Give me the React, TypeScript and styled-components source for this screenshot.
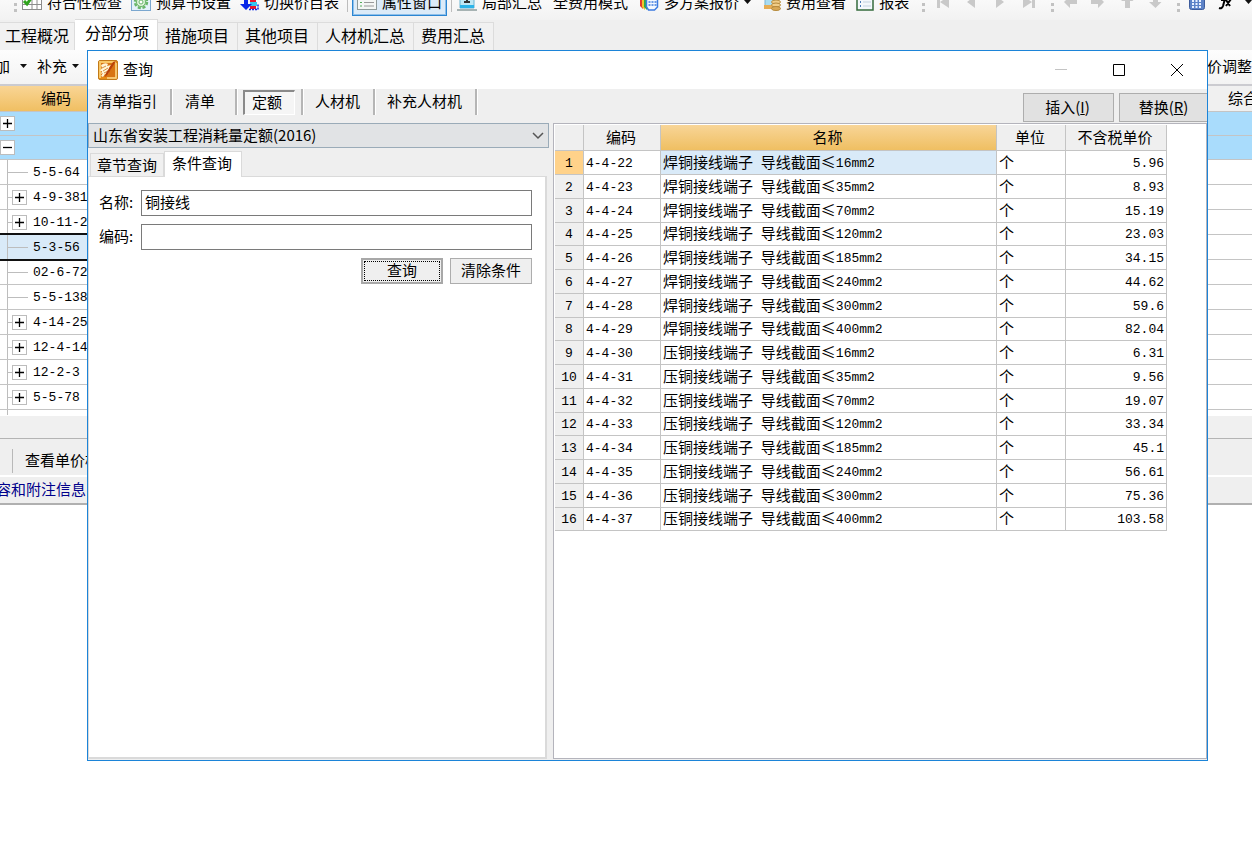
import React from 'react';
import styled, { createGlobalStyle, css } from 'styled-components';

const Global = createGlobalStyle`
  * { box-sizing: border-box; }
  body { margin: 0; background: #fff; color: #000; font: 15px/20px "Noto Sans CJK SC", sans-serif; }
  button, input, select { font: inherit; color: inherit; margin: 0; }
  button { border: 0; padding: 0 0 2px; background: none; white-space: nowrap; }
`;

const LINE = '#c4c4c4';

const Latin = styled.span`
  font-family: "Liberation Mono", monospace;
  font-size: 13px;
  line-height: 1;
  vertical-align: 1px;
`;

/* Half-width characters use the monospaced face beside the full-width ones. */
function Mixed({ text }: { text: string }) {
  const parts = text.split(/([\w.\- :()]+)/).filter(Boolean);
  return (
    <>
      {parts.map((p, i) => (/^[\w.\- :()]+$/.test(p) ? <Latin key={i}>{p}</Latin> : p))}
    </>
  );
}

/* ---------- main window ---------- */

const Desktop = styled.div`
  position: relative;
  min-height: 853px;
  overflow: hidden;
`;

const MainWindow = styled.main`
  background: #fff;
`;

const Toolbar = styled.div`
  display: flex;
  align-items: flex-end;
  height: 20px;
  padding: 0 0 4px 14px;
  overflow: hidden;
  background: linear-gradient(#f9f9f9, #f2f2f2);
`;

const ToolButton = styled.button<{ $on?: boolean; $gap: number }>`
  display: flex;
  align-items: center;
  flex: none;
  gap: 5px;
  height: 26px;
  margin-left: ${(p) => p.$gap}px;
  svg { flex: none; }
  ${(p) => p.$on && css`
    padding: 0 4px 2px;
    background: #dcebf8;
    border: 1px solid #2c86d2;
    box-shadow: inset 0 0 0 1px #8fc0ea;
  `}
`;

const Divider = styled.i<{ $gap: number }>`
  flex: none;
  width: 1px;
  height: 20px;
  margin: 0 0 4px ${(p) => p.$gap}px;
  background: #bdbdbd;
`;

const Grip = styled.i<{ $gap: number }>`
  flex: none;
  width: 3px;
  height: 16px;
  margin: 0 0 4px ${(p) => p.$gap}px;
  background: repeating-linear-gradient(to top, #c2c2c2 0 3px, transparent 3px 6px);
`;

const TabStrip = styled.div`
  display: flex;
  align-items: flex-end;
  height: 30px;
  background: #efefef;
  font-size: 16px;
`;

const MainTab = styled.button<{ $active?: boolean }>`
  height: ${(p) => (p.$active ? 31 : 28)}px;
  padding: ${(p) => (p.$active ? '0 8px 6px 10px' : '0 8px 3px 7px')};
  background: ${(p) => (p.$active ? '#fff' : '#f1f1f1')};
  border: solid #dcdcdc;
  border-width: 1px 1px 0 0;
  &:first-child { padding: 0 5px 3px 5px; }
`;

const SubToolbar = styled.div`
  display: flex;
  justify-content: space-between;
  height: 36px;
  border-bottom: 2px solid #cbcbd0;
  background: linear-gradient(#fdfdfd, #f3f3f3);
`;

const SubGroup = styled.div<{ $shift?: boolean }>`
  display: flex;
  align-items: center;
  overflow: hidden;
  gap: 10px;
  > button:first-child { margin-left: ${(p) => (p.$shift ? -5 : 0)}px; }
`;

const DropButton = styled.button<{ $gap: number }>`
  display: flex;
  align-items: center;
  gap: ${(p) => p.$gap}px;
`;

const Workspace = styled.div`
  display: flex;
  justify-content: space-between;
`;

const TreePane = styled.section`
  width: 88px;
  overflow: hidden;
`;

const SidePane = styled.section`
  flex: 1;
  overflow: hidden;
`;

const SideInner = styled.div`
  width: 46px;
  margin-left: auto;
  padding-left: 22px;
`;

const PaneHead = styled.div<{ $orange?: boolean }>`
  display: flex;
  align-items: center;
  height: 26px;
  padding: 0 0 2px ${(p) => (p.$orange ? 41 : 0)}px;
  overflow: hidden;
  white-space: nowrap;
  border-bottom: 1px solid ${LINE};
  background: ${(p) => (p.$orange ? 'linear-gradient(#f9d595, #f0bf62)' : '#f0f0f0')};
`;

const TreeRow = styled.div<{ $blue?: boolean; $selected?: boolean }>`
  display: flex;
  align-items: center;
  height: ${(p) => (p.$blue ? 24 : 25)}px;
  white-space: nowrap;
  border-bottom: 1px solid ${LINE};
  background: ${(p) => (p.$blue ? '#a9dcfc' : '#fff')};
  ${(p) => p.$selected && css`
    background: #d9eaf8;
    border-bottom-color: #111;
    box-shadow: 0 -2px 0 #111, 0 1px 0 #111;
    position: relative;
  `}
`;

const Gutter = styled.span<{ $leaf?: boolean }>`
  display: flex;
  align-items: center;
  align-self: stretch;
  flex: none;
  width: 26px;
  margin-left: 7px;
  border-left: 1px solid #bdbdbd;
  &::before {
    content: '';
    width: ${(p) => (p.$leaf ? 20 : 4)}px;
    height: 1px;
    background: #bdbdbd;
  }
`;

const Expander = styled.button`
  display: grid;
  place-items: center;
  flex: none;
  width: 15px;
  height: 15px;
  padding: 0;
  border: 1px solid #bcbcbc;
  background: #fff;
`;

const TreeEnd = styled.div`
  height: 6px;
`;

const TreeStem = styled.div`
  height: 5px;
  margin-left: 7px;
  border-left: 1px solid #bdbdbd;
`;

const ScrollTrack = styled.div`
  height: 23px;
  background: #f0f0f0;
  border-bottom: 1px solid #b4b4b4;
`;

const DetailBar = styled.div`
  display: flex;
  align-items: center;
  height: 38px;
  padding: 8px 0 0 12px;
  white-space: nowrap;
  background: #efefef;
  border-bottom: 2px solid #fff;
  > span { padding: 1px 0 3px 12px; border-left: 1px solid #b8b8b8; }
`;

const InfoBar = styled.div`
  display: flex;
  align-items: center;
  height: 28px;
  padding-bottom: 3px;
  background: #efefef;
  border-bottom: 2px solid #b0b0b0;
  color: #00008b;
  white-space: nowrap;
  > a { margin-left: -4px; color: inherit; text-decoration: none; }
`;

/* ---------- query dialog ---------- */

const Dialog = styled.section`
  position: absolute;
  top: 50px;
  left: 87px;
  right: 44px;
  height: 711px;
  display: flex;
  flex-direction: column;
  border: 1px solid #1c84d8;
  background: #efefef;
`;

const TitleBar = styled.header`
  display: flex;
  align-items: center;
  flex: none;
  height: 38px;
  padding: 0 23px 0 10px;
  background: #fff;
  h1 { flex: 1; margin: 0; padding: 0 0 2px 5px; font-size: 15px; font-weight: 400; }
`;

const WindowButtons = styled.div`
  display: flex;
  gap: 44px;
  button { display: flex; padding: 0; }
`;

const DialogTools = styled.div`
  display: flex;
  justify-content: space-between;
  height: 34px;
  overflow: hidden;
`;

const Categories = styled.nav`
  display: flex;
  height: 26px;
`;

const CategoryCell = styled.div<{ $tight?: boolean }>`
  display: flex;
  padding: ${(p) => (p.$tight ? '1px 6px 0' : '0 13px 0 12px')};
  border-right: 2px solid #b5b5b5;
  box-shadow: 1px 0 0 #fff;
  &:first-child { padding: 0 13px 0 9px; }
  &:nth-child(2) { padding: 0 20px 0 13px; }
`;

const CategoryButton = styled.button<{ $pressed?: boolean }>`
  ${(p) => p.$pressed && css`
    width: 52px;
    padding-right: 5px;
    border: solid;
    border-width: 2px 1px 1px 2px;
    border-color: #8a8a8a #fff #fff #8a8a8a;
    background: #f5f5f5;
  `}
`;

const Actions = styled.div`
  display: flex;
  gap: 5px;
  margin-right: -3px;
  padding-top: 4px;
`;

const ActionButton = styled.button`
  width: 91px;
  height: 29px;
  padding: 0 2px 1px 0;
  border: 1px solid #adadad;
  background: #e1e1e1;
`;

const Body = styled.div`
  display: flex;
  flex: 1;
  gap: 4px;
  min-height: 0;
`;

const SearchPane = styled.div`
  display: flex;
  flex-direction: column;
  flex: 0 0 461px;
`;

const LibraryBox = styled.div`
  position: relative;
  select {
    display: block;
    appearance: none;
    width: 100%;
    height: 25px;
    padding: 0 24px 2px 4px;
    border: 1px solid #9aabb8;
    border-radius: 0;
    background: #e1e3e5;
  }
  svg { position: absolute; right: 5px; top: 9px; pointer-events: none; }
`;

const QueryTabs = styled.div`
  display: flex;
  align-items: flex-end;
  height: 28px;
  padding-left: 2px;
`;

const QueryTab = styled.button<{ $active?: boolean }>`
  position: relative;
  height: ${(p) => (p.$active ? 26 : 23)}px;
  margin-bottom: ${(p) => (p.$active ? -1 : 0)}px;
  padding: ${(p) => (p.$active ? '0 9px 4px 7px' : '0 6px 1px')};
  border: 1px solid #dadada;
  border-bottom: 0;
  background: ${(p) => (p.$active ? '#fff' : '#f0f0f0')};
`;

const QueryForm = styled.form`
  flex: 1;
  margin: 0 2px 1px 0;
  padding: 13px 13px 0 10px;
  border: 1px solid #dadada;
  border-width: 1px 2px 2px 1px;
  background: #fff;
`;

const Field = styled.div`
  display: flex;
  align-items: center;
  margin-bottom: 8px;
  label { width: 42px; padding-bottom: 3px; white-space: nowrap; }
  input {
    flex: 1;
    min-width: 0;
    height: 26px;
    padding: 0 3px 4px;
    border: 1px solid #7a7a7a;
    background: #fff;
  }
`;

const FormButtons = styled.div`
  display: flex;
  justify-content: flex-end;
  gap: 7px;
`;

const FormButton = styled.button<{ $focused?: boolean }>`
  width: 82px;
  height: 26px;
  border: 1px solid #adadad;
  background: #efefef;
  ${(p) => p.$focused && css`
    outline: 1px dotted #000;
    outline-offset: -4px;
    border: 2px solid #a8a8a8;
  `}
`;

const ResultPane = styled.div`
  flex: 1;
  min-width: 0;
  margin-bottom: 1px;
  padding: 1px 0 0 1px;
  border: 1px solid #b4b4bc;
  background: #fff;
`;

const ResultTable = styled.table`
  table-layout: fixed;
  width: 612px;
  border-spacing: 0;
  th, td {
    padding: 0 2px 2px;
    line-height: 20px;
    font-weight: 400;
    white-space: nowrap;
    overflow: hidden;
    border: solid ${LINE};
    border-width: 0 1px 1px 0;
  }
  thead tr { height: 26px; }
  thead th { padding: 0 4px 1px 2px; background: #efefef; }
  tbody tr { height: 24px; }
  tbody tr:nth-child(4n) { height: 23px; }
  tbody th { background: #efefef; }
`;

const NameHead = styled.th`
  && { background: linear-gradient(#f8d597, #efbf62); }
`;

const RowNumber = styled.th<{ $current: boolean }>`
  && { background: ${(p) => (p.$current ? '#ffd28a' : '#efefef')}; }
`;

const NameCell = styled.td<{ $current: boolean }>`
  background: ${(p) => (p.$current ? '#d9eaf8' : '#fff')};
`;

const PriceCell = styled.td`
  text-align: right;
`;

/* ---------- icons ---------- */

const Caret = () => (
  <svg width="7" height="4" viewBox="0 0 7 4"><path d="M0 0h7L3.500 4z" fill="#111" /></svg>
);

const CheckSheetIcon = () => (
  <svg width="20" height="18" viewBox="0 0 20 18">
    <rect x=".5" y=".5" width="19" height="16" fill="#fff" stroke="#8c8c8c" />
    <path d="M.5 11.500h19M10 6v11M15 6v11M8 6h12" stroke="#8c8c8c" />
    <path d="M2 8l3 3 5-7" stroke="#2fa31c" strokeWidth="3" fill="none" />
  </svg>
);
const GearIcon = () => (
  <svg width="20" height="20" viewBox="0 0 20 20">
    <rect x=".5" y=".5" width="19" height="18" fill="#e3f1fb" stroke="#7ba7cf" />
    <circle cx="10" cy="10" r="6" fill="#d2efcf" stroke="#68b56b" strokeWidth="2.500" strokeDasharray="3 1.700" />
    <circle cx="10" cy="10" r="4.500" fill="#dff4dc" stroke="#68b56b" />
    <circle cx="10" cy="10" r="2" fill="#fff" stroke="#68b56b" />
  </svg>
);
const SwitchIcon = () => (
  <svg width="19" height="20" viewBox="0 0 19 20">
    <path d="M10 17V8H8l5-6 5 6h-2v9z" fill="#e81830" />
    <path d="M10 10h7v4h-7z" fill="#36c7f0" />
    <path d="M9 17.500h9v-5" stroke="#0a28e8" strokeWidth="1.500" strokeDasharray="2 1" fill="none" />
    <path d="M4 2h4v10h4l-6 6-6-6h4z" fill="#0a28e8" />
  </svg>
);
const ListIcon = () => (
  <svg width="20" height="17" viewBox="0 0 20 17">
    <rect x=".5" y=".5" width="19" height="15" fill="#f5f7f5" stroke="#8e9a9a" />
    <path d="M3 5h2M3 8.500h2M3 12h2" stroke="#57ad5c" />
    <path d="M7 5h10M7 8.500h10M7 12h10" stroke="#9a9a9a" />
  </svg>
);
const SumIcon = () => (
  <svg width="20" height="19" viewBox="0 0 20 19">
    <path d="M3 1h14v14H3z" fill="#bfe8f5" stroke="#6ab4d2" />
    <path d="M7 9h6M10 5v5" stroke="#333" strokeWidth="2" />
    <path d="M3 12h14v3H3z" fill="#2cb4e8" /><path d="M0 16h20v2H0z" fill="#a7b3b3" />
  </svg>
);
const SchemeIcon = () => (
  <svg width="20" height="20" viewBox="0 0 20 20">
    <path d="M1 3v11l3 3V3z" fill="#e23b2c" /><path d="M3 3v12l3 3V3z" fill="#f0c52c" /><path d="M5 3v12l3 3V3z" fill="#2fa84a" />
    <path d="M7.500 2h11v13l-3 3h-6l-2-3z" fill="#f5f9ff" stroke="#3c7be0" strokeWidth="1.500" />
    <path d="M9.500 10h2M12.500 10h2M15.500 10h2M9.500 13h2M12.500 13h2M15.500 13h2" stroke="#3c7be0" strokeWidth="1.500" />
  </svg>
);
const FeeIcon = () => (
  <svg width="17" height="20" viewBox="0 0 17 20">
    <path d="M1 1h10v13H1z" fill="#a9ddf2" stroke="#7fb5d0" />
    <path d="M0 13h9v4H0z" fill="#e6ad55" />
    <ellipse cx="12" cy="10" rx="4.500" ry="2" fill="#f0cd88" stroke="#b58a3c" />
    <ellipse cx="12" cy="13" rx="4.500" ry="2" fill="#f0cd88" stroke="#b58a3c" />
    <ellipse cx="12" cy="16.500" rx="4.500" ry="2" fill="#d9a957" stroke="#b58a3c" />
  </svg>
);
const ReportIcon = () => (
  <svg width="18" height="19" viewBox="0 0 18 19">
    <rect x="1" y="1" width="16" height="16" fill="#f3f8fc" stroke="#356b3c" strokeWidth="1.500" />
    <path d="M4 5h1M4 9h1M4 13h1" stroke="#4a7bb8" strokeWidth="2" /><path d="M7 5h8M7 9h8M7 13h8" stroke="#c3d3e0" />
  </svg>
);
const Nav = ({ d }: { d: string }) => (
  <svg width="13" height="14" viewBox="0 0 13 14"><path d={d} fill="#c9c9c9" /></svg>
);
const CalculatorIcon = () => (
  <svg width="16" height="18" viewBox="0 0 16 18">
    <rect x=".5" y=".5" width="15" height="16" rx="2" fill="#5d83c8" stroke="#3d5c9c" />
    <path d="M3 8h2m1.500 0h2m1.500 0h2M3 11h2m1.500 0h2m1.500 0h2M3 14h2m1.500 0h2m1.500 0h2" stroke="#e8f0ff" strokeWidth="2" />
  </svg>
);
const FormulaIcon = () => (
  <svg width="15" height="16" viewBox="0 0 15 16" fill="none" stroke="#000" strokeWidth="2">
    <path d="M8 1L5 12q-1 3-4 2M3 6h6M8 12l5-7M8 6l4 6M10 4h4" />
  </svg>
);
const AppIcon = () => (
  <svg width="20" height="20" viewBox="0 0 20 20">
    <rect x=".5" y=".5" width="19" height="19" rx="1.500" fill="#e58a14" stroke="#c27a18" />
    <path d="M2 18V2h16" fill="none" stroke="#f9c765" strokeWidth="2" />
    <path d="M3 3h14v14H3z" fill="#d87412" />
    <path d="M3 5q4-3 7-1l-1 2 4-1-2 3 2 1-3 2 1 2-4 1-2 3-2-1 2-3-2 1 1-3-2 0 2-3z" fill="#fff5d6" />
    <path d="M4 8l4-2M5 11l5-3M6 13l4-2" stroke="#c9761c" strokeWidth=".8" />
    <path d="M18 1L10 14l-3 3 1-4L15 2z" fill="#b8400a" />
    <path d="M18 3v15H9" fill="none" stroke="#fbd98c" strokeWidth="1.500" />
  </svg>
);

/* ---------- data ---------- */

const treeRows: [string, boolean][] = [
  ['5-5-64', false], ['4-9-381', true], ['10-11-28', true], ['5-3-56', false], ['02-6-72', false],
  ['5-5-138', false], ['4-14-258', true], ['12-4-14', true], ['12-2-3', true], ['5-5-78', true],
];

const sizes = ['16', '35', '70', '120', '185', '240', '300', '400'];
const prices = ['5.96', '8.93', '15.19', '23.03', '34.15', '44.62', '59.6', '82.04', '6.31', '9.56', '19.07', '33.34', '45.1', '56.61', '75.36', '103.58'];
const results = prices.map((price, i) => ({
  code: `4-4-${22 + i}`,
  name: `${i < 8 ? '焊' : '压'}铜接线端子 导线截面≤${sizes[i % 8]}mm2`,
  price,
}));

const ExpandMark = ({ open }: { open?: boolean }) => (
  <svg width="9" height="9" viewBox="0 0 9 9"><path d={open ? 'M0 4.500h9' : 'M0 4.500h9M4.500 0v9'} stroke="#000" strokeWidth="1.300" /></svg>
);

export default function App() {
  return (
    <Desktop>
      <Global />
      <MainWindow>
        <Toolbar>
          <Grip $gap={0} />
          <ToolButton $gap={5}><CheckSheetIcon />符合性检查</ToolButton>
          <ToolButton $gap={9}><GearIcon />预算书设置</ToolButton>
          <ToolButton $gap={9}><SwitchIcon />切换价目表</ToolButton>
          <Divider $gap={8} />
          <ToolButton $gap={4} $on><ListIcon />属性窗口</ToolButton>
          <Divider $gap={4} />
          <ToolButton $gap={5}><SumIcon />局部汇总</ToolButton>
          <ToolButton $gap={11}>全费用模式</ToolButton>
          <ToolButton $gap={11}><SchemeIcon />多方案报价<Caret /></ToolButton>
          <ToolButton $gap={13}><FeeIcon />费用查看</ToolButton>
          <ToolButton $gap={10}><ReportIcon />报表</ToolButton>
          <Grip $gap={13} />
          <ToolButton $gap={12} aria-label="首条"><Nav d="M0 1h3v12H0zM12 1v12L3 7z" /></ToolButton>
          <ToolButton $gap={14} aria-label="上一条"><Nav d="M11 1v12L3 7z" /></ToolButton>
          <ToolButton $gap={17} aria-label="下一条"><Nav d="M2 1v12l8-6z" /></ToolButton>
          <ToolButton $gap={15} aria-label="末条"><Nav d="M13 1h-3v12h3zM1 1v12l9-6z" /></ToolButton>
          <Grip $gap={16} />
          <ToolButton $gap={10} aria-label="左移"><Nav d="M0 7l6-6v4h7v4H6v4z" /></ToolButton>
          <ToolButton $gap={14} aria-label="右移"><Nav d="M13 7L7 1v4H0v4h7v4z" /></ToolButton>
          <ToolButton $gap={17} aria-label="上移"><Nav d="M6.500 0l6 6H9v7H4V6H0z" /></ToolButton>
          <ToolButton $gap={15} aria-label="下移"><Nav d="M6.500 13l6-6H9V0H4v7H0z" /></ToolButton>
          <Grip $gap={15} />
          <ToolButton $gap={9} aria-label="计算器"><CalculatorIcon /></ToolButton>
          <ToolButton $gap={13} aria-label="公式"><FormulaIcon /></ToolButton>
          <ToolButton $gap={12} aria-label="更多"><Caret /></ToolButton>
        </Toolbar>

        <TabStrip>
          <MainTab>工程概况</MainTab>
          <MainTab $active>分部分项</MainTab>
          <MainTab>措施项目</MainTab>
          <MainTab>其他项目</MainTab>
          <MainTab>人材机汇总</MainTab>
          <MainTab>费用汇总</MainTab>
        </TabStrip>

        <SubToolbar>
          <SubGroup $shift>
            <DropButton $gap={10}>加<Caret /></DropButton>
            <DropButton $gap={5}>补充<Caret /></DropButton>
          </SubGroup>
          <SubGroup><DropButton $gap={0}>价调整</DropButton></SubGroup>
        </SubToolbar>

        <Workspace>
          <TreePane>
            <PaneHead $orange>编码</PaneHead>
            <TreeRow $blue><Expander aria-label="展开"><ExpandMark /></Expander></TreeRow>
            <TreeRow $blue><Expander aria-label="折叠"><ExpandMark open /></Expander></TreeRow>
            {treeRows.map(([code, branch]) => (
              <TreeRow key={code} $selected={code === '5-3-56'}>
                <Gutter $leaf={!branch}>
                  {branch && <Expander aria-label="展开"><ExpandMark /></Expander>}
                </Gutter>
                <Latin>{code}</Latin>
              </TreeRow>
            ))}
            <TreeEnd><TreeStem /></TreeEnd>
            <ScrollTrack />
            <DetailBar><span>查看单价构成</span></DetailBar>
            <InfoBar><a href="#notes">容和附注信息</a></InfoBar>
          </TreePane>
          <SidePane>
            <PaneHead><SideInner>综合单价</SideInner></PaneHead>
            <TreeRow $blue />
            <TreeRow $blue />
            {treeRows.map(([code]) => <TreeRow key={code} />)}
            <TreeEnd />
            <ScrollTrack />
            <DetailBar />
            <InfoBar />
          </SidePane>
        </Workspace>
      </MainWindow>

      <Dialog role="dialog" aria-labelledby="query-title">
        <TitleBar>
          <AppIcon />
          <h1 id="query-title">查询</h1>
          <WindowButtons>
            <button aria-label="最小化"><svg width="14" height="14"><path d="M1 6.500h12" stroke="#c4c4c4" /></svg></button>
            <button aria-label="最大化"><svg width="14" height="14"><path d="M1.500 1.500h11v11h-11z" fill="none" stroke="#000" /></svg></button>
            <button aria-label="关闭"><svg width="14" height="14"><path d="M1 1l12 12M13 1L1 13" stroke="#000" /></svg></button>
          </WindowButtons>
        </TitleBar>

        <DialogTools>
          <Categories>
            <CategoryCell><CategoryButton>清单指引</CategoryButton></CategoryCell>
            <CategoryCell><CategoryButton>清单</CategoryButton></CategoryCell>
            <CategoryCell $tight><CategoryButton $pressed>定额</CategoryButton></CategoryCell>
            <CategoryCell><CategoryButton>人材机</CategoryButton></CategoryCell>
            <CategoryCell><CategoryButton>补充人材机</CategoryButton></CategoryCell>
          </Categories>
          <Actions>
            <ActionButton>插入(<u>I</u>)</ActionButton>
            <ActionButton>替换(<u>R</u>)</ActionButton>
          </Actions>
        </DialogTools>

        <Body>
          <SearchPane>
            <LibraryBox>
              <select aria-label="定额库"><option>山东省安装工程消耗量定额(2016)</option></select>
              <svg width="12" height="8" viewBox="0 0 12 8"><path d="M1 1l5 5 5-5" fill="none" stroke="#555" strokeWidth="1.500" /></svg>
            </LibraryBox>
            <QueryTabs>
              <QueryTab>章节查询</QueryTab>
              <QueryTab $active>条件查询</QueryTab>
            </QueryTabs>
            <QueryForm onSubmit={(e) => e.preventDefault()}>
              <Field><label htmlFor="name">名称:</label><input id="name" defaultValue="铜接线" /></Field>
              <Field><label htmlFor="code">编码:</label><input id="code" /></Field>
              <FormButtons>
                <FormButton type="submit" $focused>查询</FormButton>
                <FormButton type="reset">清除条件</FormButton>
              </FormButtons>
            </QueryForm>
          </SearchPane>

          <ResultPane>
            <ResultTable>
              <colgroup>
                <col style={{ width: 29 }} /><col style={{ width: 77 }} /><col />
                <col style={{ width: 69 }} /><col style={{ width: 101 }} />
              </colgroup>
              <thead>
                <tr><th /><th>编码</th><NameHead>名称</NameHead><th>单位</th><th>不含税单价</th></tr>
              </thead>
              <tbody>
                {results.map((r, i) => (
                  <tr key={r.code}>
                    <RowNumber $current={i === 0}><Latin>{i + 1}</Latin></RowNumber>
                    <td><Latin>{r.code}</Latin></td>
                    <NameCell $current={i === 0}><Mixed text={r.name} /></NameCell>
                    <td>个</td>
                    <PriceCell><Latin>{r.price}</Latin></PriceCell>
                  </tr>
                ))}
              </tbody>
            </ResultTable>
          </ResultPane>
        </Body>
      </Dialog>
    </Desktop>
  );
}
